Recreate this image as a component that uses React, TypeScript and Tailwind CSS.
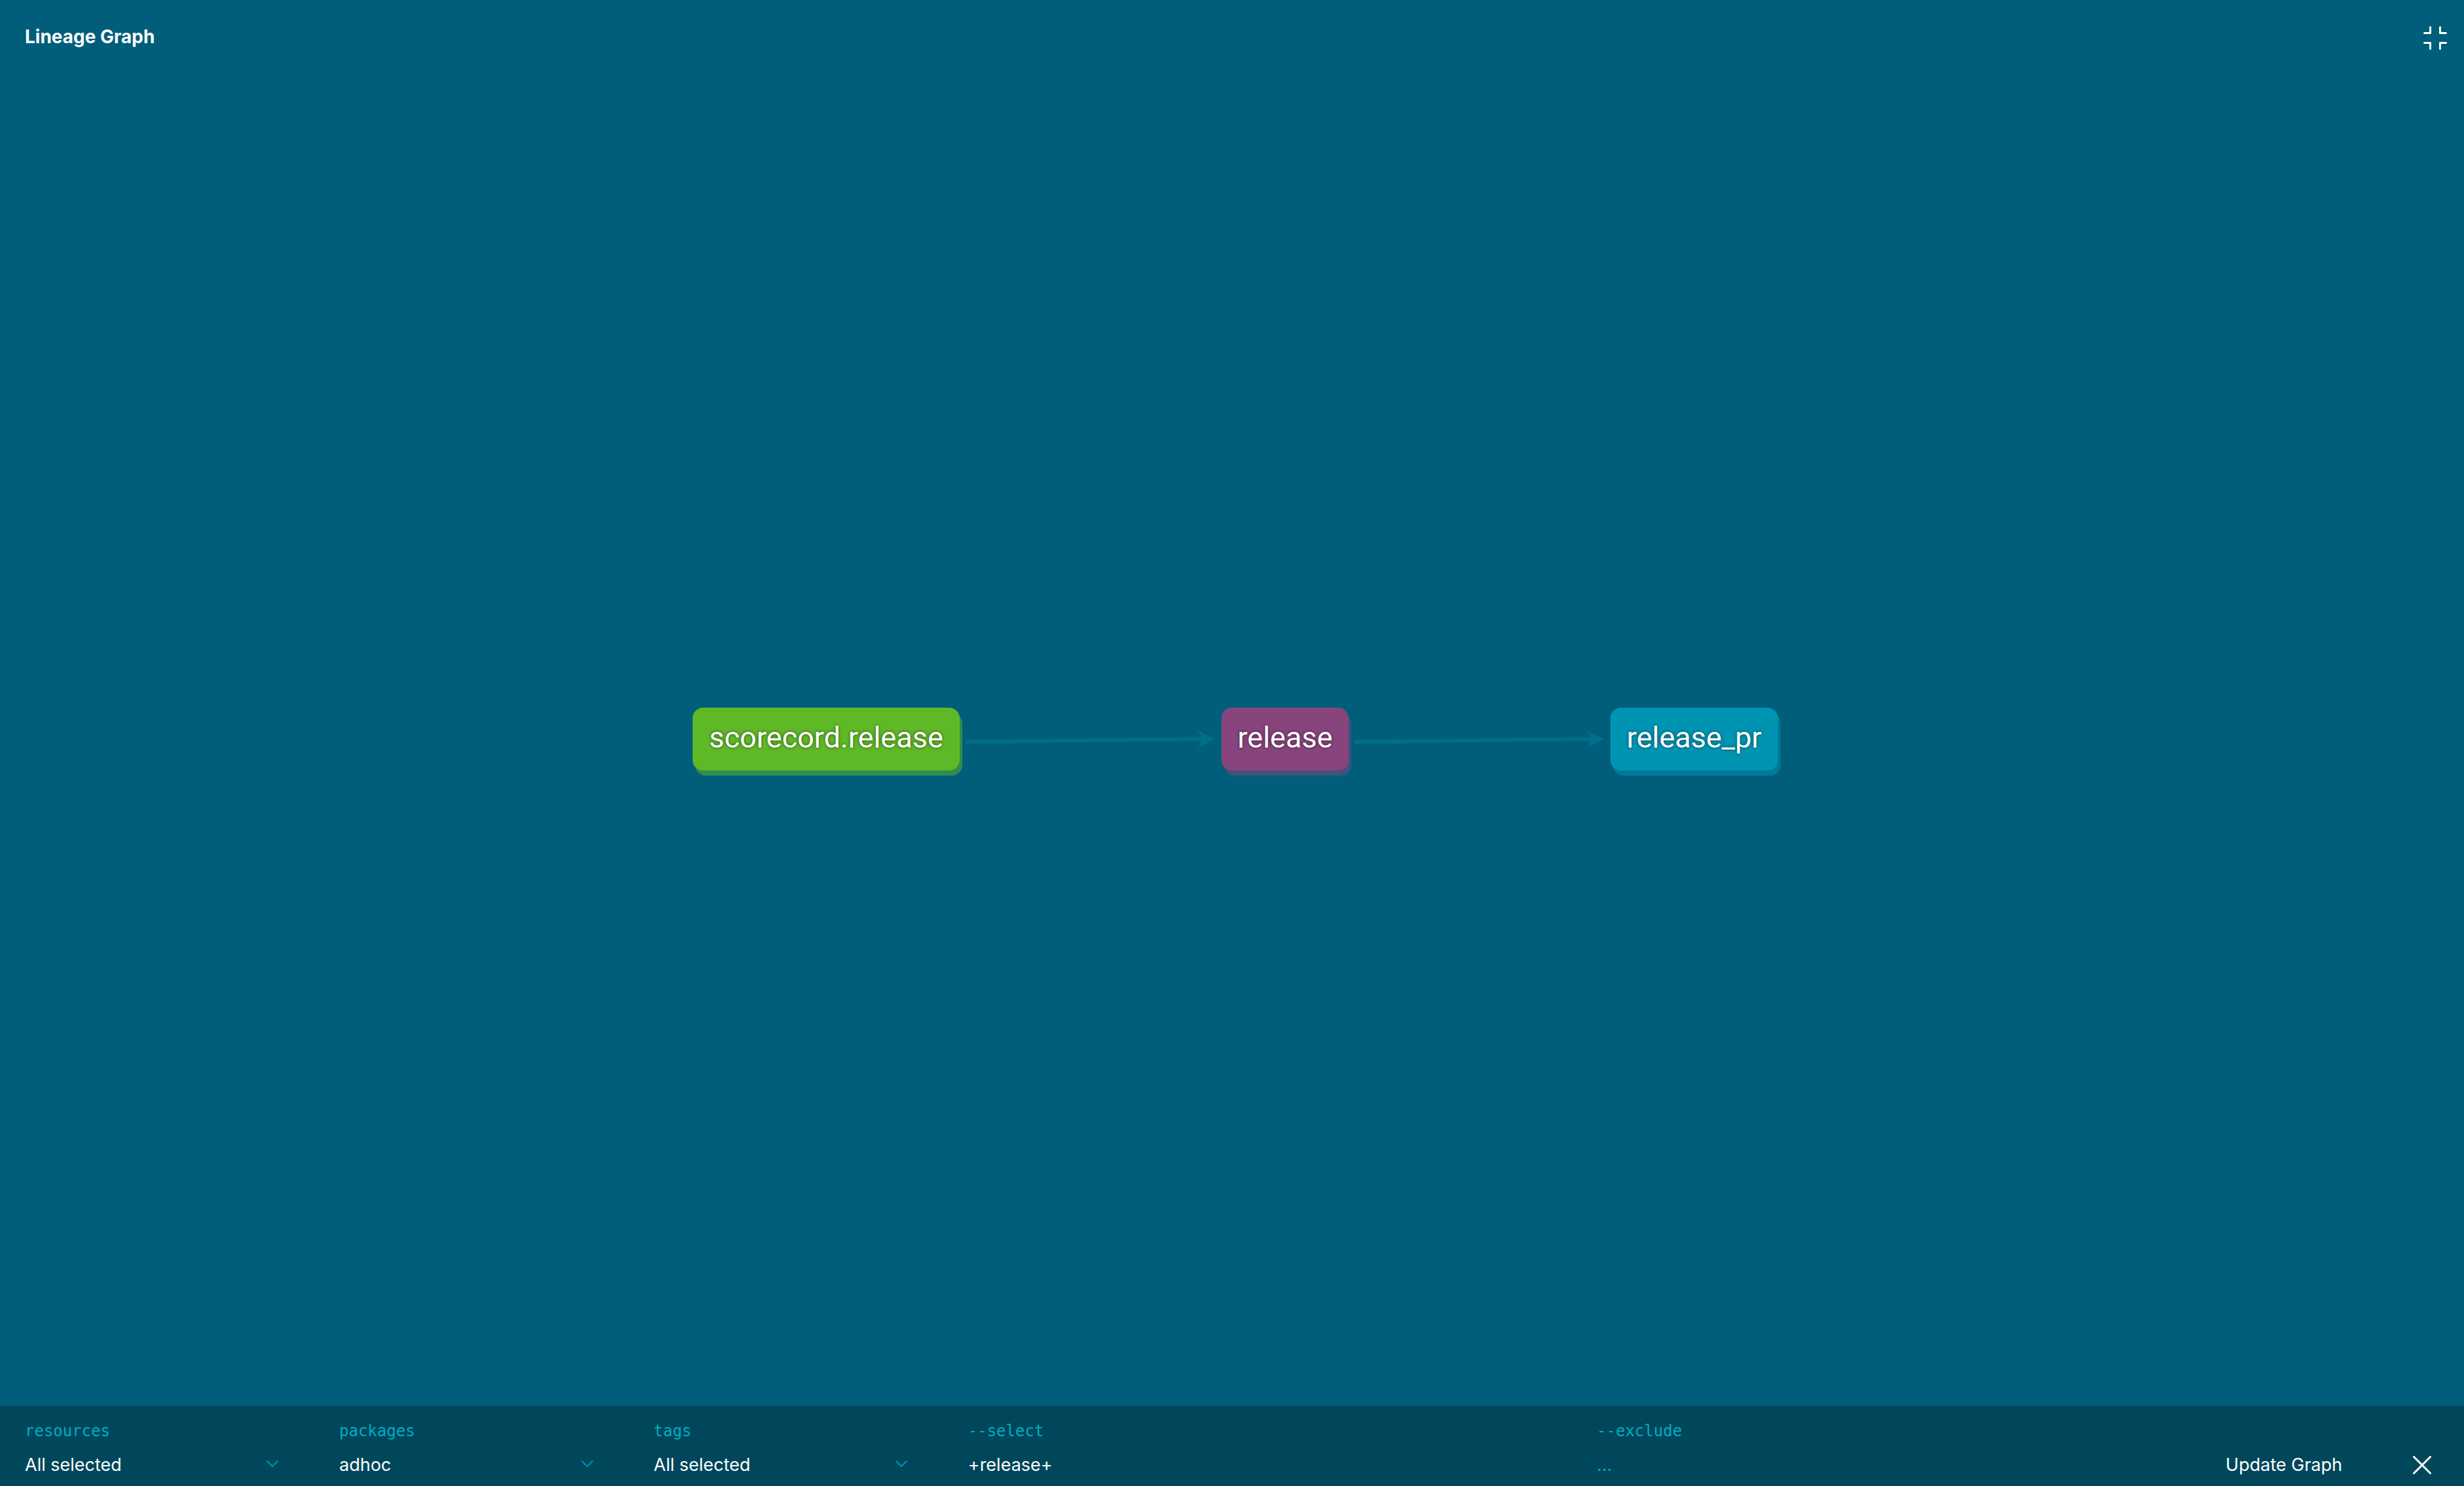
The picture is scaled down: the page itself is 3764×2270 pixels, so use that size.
import { useId } from "react";

function CollapseIcon() {
  return (
    <svg width="36" height="40" viewBox="0 0 36 40" fill="none" stroke="white" strokeWidth="3" strokeLinecap="round" strokeLinejoin="round">
      <path d="M10.5 5.5V14.5H1.5M25.5 5.5V14.5H34.5M1.5 29.5H10.5V38.5M34.5 29.5H25.5V38.5" />
    </svg>
  );
}

function CloseIcon() {
  return (
    <svg width="28" height="28" viewBox="0 0 28 28" fill="none" stroke="white" strokeWidth="3" strokeLinecap="round">
      <path d="M1.5 1.5L26.5 26.5M26.5 1.5L1.5 26.5" />
    </svg>
  );
}

function Node({ label, className }: { label: string; className: string }) {
  return (
    <button
      type="button"
      className={`h-24 shrink-0 rounded-2xl pb-1 text-center font-['Roboto',sans-serif] text-[45px] whitespace-nowrap text-white [text-shadow:0_0_4px_rgba(0,0,0,0.6)] ${className}`}
    >
      {label}
    </button>
  );
}

function Edge() {
  return (
    <svg width="400" height="40" viewBox="0 0 400 40" className="shrink-0" fill="none">
      <path d="M9 24C140 24 240 20 372 20" stroke="#006f8a" strokeWidth="6" />
      <path d="M362 6L390 20L362 34Q369 28 369 20Q369 12 362 6Z" fill="#006f8a" />
    </svg>
  );
}

const labelClass = "font-['DejaVu_Sans_Mono',monospace] text-2xl leading-8 text-[#00adc4]";
const valueClass = "h-10 w-full bg-transparent p-0 text-[27px] leading-10 text-white outline-none";

function SelectField({ label, value }: { label: string; value: string }) {
  const id = useId();
  return (
    <div className="flex flex-col gap-4 pr-[92px]">
      <label htmlFor={id} className={labelClass}>{label}</label>
      <div className="grid items-center">
        <select id={id} defaultValue={value} className={`col-start-1 row-start-1 appearance-none ${valueClass}`}>
          <option>{value}</option>
        </select>
        <svg width="20" height="12" viewBox="0 0 20 12" fill="none" stroke="#0094b3" strokeWidth="2" strokeLinecap="round" strokeLinejoin="round" className="pointer-events-none col-start-1 row-start-1 mb-1 justify-self-end">
          <path d="M2 2L10 10L18 2" />
        </svg>
      </div>
    </div>
  );
}

function TextField({ label, value }: { label: string; value?: string }) {
  const id = useId();
  return (
    <div className="flex flex-col gap-4 pr-12">
      <label htmlFor={id} className={labelClass}>{label}</label>
      <input id={id} type="text" defaultValue={value} placeholder="..." className={`placeholder:text-[#00adc4] placeholder:opacity-100 ${valueClass}`} />
    </div>
  );
}

export default function App() {
  return (
    <div className="flex min-h-screen flex-col bg-[#005e7a] font-['Inter',sans-serif] text-white">
      <header className="flex items-start justify-between pt-9 pr-[26px] pb-[34px] pl-[38px]">
        <h1 className="text-[28px] leading-10 font-bold">Lineage Graph</h1>
        <button type="button" aria-label="Exit full screen">
          <CollapseIcon />
        </button>
      </header>

      <main className="flex flex-1 items-center justify-center pl-2.5">
        <Node label="scorecord.release" className="w-[408px] bg-[#5fb825] shadow-[4px_8px_0_#308b50]" />
        <Edge />
        <Node label="release" className="w-[194px] bg-[#88447d] shadow-[4px_8px_0_#44517c]" />
        <Edge />
        <Node label="release_pr" className="w-64 bg-[#0094b3] shadow-[4px_8px_0_#007996]" />
      </main>

      <form className="grid grid-cols-[480fr_480fr_480fr_960fr_960fr_328fr] bg-[#00475b] pt-[22px] pr-9 pb-3 pl-[38px]" onSubmit={(e) => e.preventDefault()}>
        <SelectField label="resources" value="All selected" />
        <SelectField label="packages" value="adhoc" />
        <SelectField label="tags" value="All selected" />
        <TextField label="--select" value="+release+" />
        <TextField label="--exclude" />
        <div className="flex items-end justify-between pr-3.5">
          <button type="submit" className="text-[27px] leading-10 whitespace-nowrap">Update Graph</button>
          <button type="button" aria-label="Close" className="flex h-10 items-center">
            <CloseIcon />
          </button>
        </div>
      </form>
    </div>
  );
}
